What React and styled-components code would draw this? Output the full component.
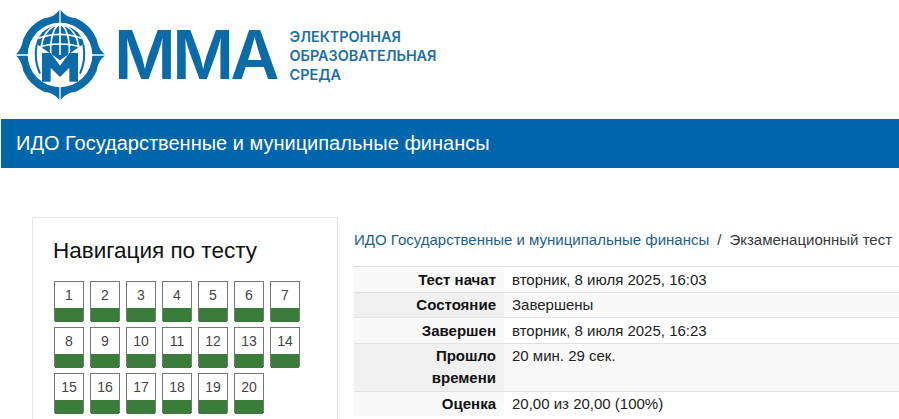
import styled, { createGlobalStyle } from "styled-components";

const GlobalStyle = createGlobalStyle`
  html, body {
    margin: 0;
    background: #fff;
    font-family: "Liberation Sans", Arial, sans-serif;
  }
`;

const Page = styled.div`
  height: 419px;
  overflow: hidden;
`;

const Header = styled.header`
  display: flex;
  align-items: flex-start;
  height: 119px;
  padding: 5px 0 0 10px;
  box-sizing: border-box;
`;

const Wordmark = styled.div`
  margin: 9px 0 0 4px;
  font-family: Inter, sans-serif;
  font-size: 67px;
  font-weight: 600;
  line-height: 82px;
  letter-spacing: -3.6px;
  color: #0b6ba8;
`;

const Tagline = styled.div`
  margin: 22px 0 0 14px;
  font-family: Inter, sans-serif;
  font-size: 14.4px;
  font-weight: 600;
  line-height: 19px;
  color: #1b6fa6;
`;

const Band = styled.div`
  display: flex;
  align-items: center;
  height: 49px;
  margin-left: 1px;
  padding-left: 15px;
  background: #0066ac;
  color: #fff;
  font-size: 20px;
`;

const Main = styled.main`
  display: flex;
  align-items: flex-start;
  gap: 16px;
  margin: 49px 0 0 32px;
`;

const Card = styled.aside`
  flex: 0 0 306px;
  box-sizing: border-box;
  height: 300px;
  padding: 18px 20px;
  border: 1px solid #e5e5e5;
`;

const CardTitle = styled.h2`
  margin: 0 0 15px;
  font-size: 22.5px;
  font-weight: 400;
  line-height: 30px;
  color: #111;
`;

const QuestionGrid = styled.div`
  display: grid;
  grid-template-columns: repeat(7, 30px);
  gap: 6px;
  margin-left: 1px;
`;

const Question = styled.div`
  display: flex;
  flex-direction: column;
  box-sizing: border-box;
  height: 40px;
  border: 1px solid #777;
  font-size: 14px;
  color: #444;
  text-align: center;
`;

const QuestionNumber = styled.span`
  flex: 1;
  line-height: 26px;
`;

const QuestionBar = styled.span`
  flex: 0 0 14px;
  background: #3a7d3a;
`;

const Content = styled.section`
  flex: 1;
  min-width: 0;
`;

const Breadcrumb = styled.nav`
  display: flex;
  gap: 8px;
  height: 49px;
  padding-top: 14px;
  box-sizing: border-box;
  font-size: 15px;
  line-height: 17px;
  white-space: nowrap;
  color: #373a3c;
`;

const CrumbLink = styled.a`
  color: #1d5f8a;
`;

const Summary = styled.table`
  width: 100%;
  border-collapse: collapse;
  font-size: 15px;
  line-height: 22px;
  color: #222;
`;

const Row = styled.tr`
  border-top: 1px solid #dee2e6;
`;

const Label = styled.th`
  width: 150px;
  box-sizing: border-box;
  padding: 1.5px 8px 1.17px 30px;
  text-align: right;
  vertical-align: top;
  font-weight: 700;
  color: #111;
  background: ${(p) => (p.$even ? "#f0f0f0" : "#f9f9f9")};
`;

const Value = styled.td`
  padding: 1.5px 8px 1.17px;
  vertical-align: top;
  background: ${(p) => (p.$even ? "#f9f9f9" : "#fff")};
`;

const questions = Array.from({ length: 20 }, (_, i) => i + 1);

const summary = [
  ["Тест начат", "вторник, 8 июля 2025, 16:03"],
  ["Состояние", "Завершены"],
  ["Завершен", "вторник, 8 июля 2025, 16:23"],
  ["Прошло времени", "20 мин. 29 сек."],
  ["Оценка", "20,00 из 20,00 (100%)"],
];

function Emblem() {
  const blue = "#0b6ba8";
  return (
    <svg width="100" height="100" viewBox="0 0 300 300" aria-hidden="true">
      <defs>
        <clipPath id="globe-clip">
          <path d="M70 0H230V110L150 166L70 110Z" />
        </clipPath>
      </defs>
      <path
        fill={blue}
        d="M150 12C160 28 176 38 198 40A122 122 0 0 1 260 102C264 124 272 140 288 150C272 160 264 176 260 198A122 122 0 0 1 198 260C176 262 160 272 150 288C140 272 124 262 102 260A122 122 0 0 1 40 198C36 176 28 160 16 150C28 140 36 124 40 102A122 122 0 0 1 102 40C124 38 140 28 150 12Z"
      />
      <circle cx="150" cy="150" r="97" fill="#fff" />
      <path stroke="#fff" strokeWidth="4" d="M150 10V54M150 246V290M14 150H54M246 150H290" />
      <g clipPath="url(#globe-clip)">
        <circle cx="150" cy="134" r="74" fill={blue} />
        <g fill="none" stroke="#fff" strokeWidth="5">
          <path d="M150 55V150" />
          <ellipse cx="150" cy="134" rx="28" ry="74" />
          <ellipse cx="150" cy="134" rx="56" ry="74" />
          <path d="M84 100Q150 76 216 100M74 130Q150 104 226 130" />
        </g>
      </g>
      <path
        fill="none"
        stroke={blue}
        strokeWidth="6"
        d="M80 118C74 150 78 180 90 206M220 118C226 150 222 180 210 206"
      />
      <path
        fill={blue}
        d="M96 230V144H122L150 182L178 144H204V230H178V188L150 216L122 188V230Z"
      />
    </svg>
  );
}

export default function App() {
  return (
    <Page>
      <GlobalStyle />
      <Header>
        <Emblem />
        <Wordmark>ММА</Wordmark>
        <Tagline>
          ЭЛЕКТРОННАЯ
          <br />
          ОБРАЗОВАТЕЛЬНАЯ
          <br />
          СРЕДА
        </Tagline>
      </Header>
      <Band>ИДО Государственные и муниципальные финансы</Band>
      <Main>
        <Card>
          <CardTitle>Навигация по тесту</CardTitle>
          <QuestionGrid>
            {questions.map((n) => (
              <Question key={n}>
                <QuestionNumber>{n}</QuestionNumber>
                <QuestionBar />
              </Question>
            ))}
          </QuestionGrid>
        </Card>
        <Content>
          <Breadcrumb>
            <CrumbLink>ИДО Государственные и муниципальные финансы</CrumbLink>
            <span>/</span>
            <span>Экзаменационный тест</span>
          </Breadcrumb>
          <Summary>
            <tbody>
              {summary.map(([label, value], i) => (
                <Row key={label}>
                  <Label $even={i % 2 === 1}>{label}</Label>
                  <Value $even={i % 2 === 1}>{value}</Value>
                </Row>
              ))}
            </tbody>
          </Summary>
        </Content>
      </Main>
    </Page>
  );
}
